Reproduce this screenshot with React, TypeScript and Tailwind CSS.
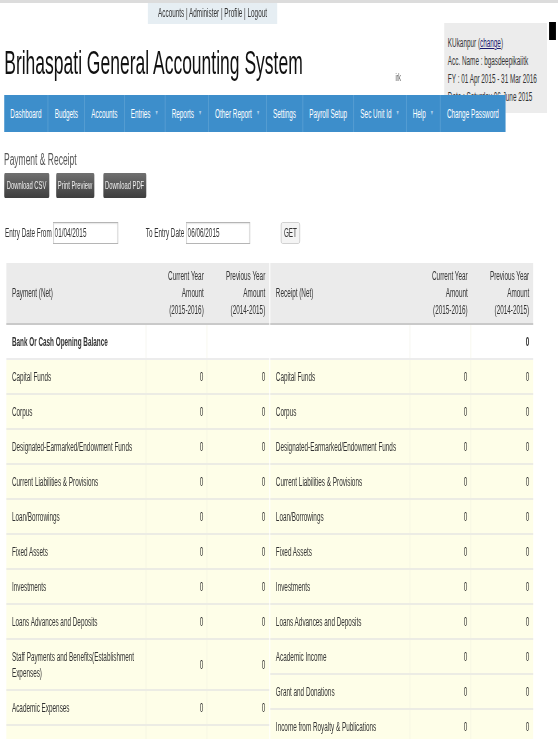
import React from 'react'

type Row = { label: string; cur?: string; prev?: string; bold?: boolean; plain?: boolean }

const NAV: { label: string; menu?: boolean }[] = [
  { label: 'Dashboard' },
  { label: 'Budgets' },
  { label: 'Accounts' },
  { label: 'Entries', menu: true },
  { label: 'Reports', menu: true },
  { label: 'Other Report', menu: true },
  { label: 'Settings' },
  { label: 'Payroll Setup' },
  { label: 'Sec Unit Id', menu: true },
  { label: 'Help', menu: true },
  { label: 'Change Password' },
]

const common = [
  'Capital Funds',
  'Corpus',
  'Designated-Earmarked/Endowment Funds',
  'Current Liabilities & Provisions',
  'Loan/Borrowings',
  'Fixed Assets',
  'Investments',
  'Loans Advances and Deposits',
]

const paymentRows: Row[] = [
  { label: 'Bank Or Cash Opening Balance', bold: true, plain: true },
  ...common.map((label) => ({ label, cur: '0', prev: '0' })),
  { label: 'Staff Payments and Benefits(Establishment Expenses)', cur: '0', prev: '0' },
  { label: 'Academic Expenses', cur: '0', prev: '0' },
  { label: '' },
]

const receiptRows: Row[] = [
  { label: '', prev: '0', bold: true, plain: true },
  ...common.map((label) => ({ label, cur: '0', prev: '0' })),
  { label: 'Academic Income', cur: '0', prev: '0' },
  { label: 'Grant and Donations', cur: '0', prev: '0' },
  { label: 'Income from Royalty & Publications', cur: '0', prev: '0' },
  { label: '' },
]

function ReportTable({ title, rows }: { title: string; rows: Row[] }) {
  return (
    <div className="w-[496px]">
      <div className="grid grid-cols-[264px_115px_117px] border-b-2 border-[#c9c9c9] bg-[#ebebeb] text-[12px] leading-[17px]">
        <div className="flex items-center py-[4.5px] pl-[11px]">{title}</div>
        <div className="py-[4.5px] pr-[6px] text-right">
          Current Year
          <br />
          Amount
          <br />
          (2015-2016)
        </div>
        <div className="py-[4.5px] pr-[7px] text-right">
          Previous Year
          <br />
          Amount
          <br />
          (2014-2015)
        </div>
      </div>
      {rows.map((r, i) => (
        <div
          key={i}
          className={
            r.plain
              ? 'grid grid-cols-[264px_115px_117px] border-b-2 border-[#ececec] bg-white text-[12px] leading-[16px]'
              : 'grid grid-cols-[264px_115px_117px] border-b-2 border-[#ececE4] bg-[#fefee8] text-[12px] leading-[16px]'
          }
        >
          <div
            className={
              r.bold
                ? 'flex min-h-[33px] items-center border-r border-[#eeeee4] py-[8.5px] pl-[11px] pr-[8px] font-bold'
                : 'flex min-h-[33px] items-center border-r border-[#f0f0e0] py-[8.5px] pl-[11px] pr-[8px]'
            }
          >
            {r.label}
          </div>
          <div className="flex items-center justify-end border-r border-[#f0f0e0] py-[8.5px] pr-[6px]">
            {r.cur}
          </div>
          <div
            className={
              r.bold
                ? 'flex items-center justify-end py-[8.5px] pr-[7px] font-bold'
                : 'flex items-center justify-end py-[8.5px] pr-[7px]'
            }
          >
            {r.prev}
          </div>
        </div>
      ))}
    </div>
  )
}

export default function App() {
  return (
    <div className="h-[739px] w-[558px] overflow-hidden bg-white">
      {/* the page is drawn at its own width and squeezed to the window */}
      <div className="w-[1053px] origin-top-left scale-x-[0.53] font-['Liberation_Sans',Arial,sans-serif] text-[#333]">
        <div className="h-[3px] bg-[#dcdcdc]" />

        <div className="relative">
          <div className="ml-[279px] h-[21px] w-[244px] bg-[#e6eef3] text-center text-[12px] leading-[21px] text-[#333]">
            Accounts | Administer | Profile | Logout
          </div>

          <div className="flex h-[71px] items-end pb-[12px] pl-[8px]">
            <h1 className="w-[738px] text-[33px] leading-[40px] text-[#111]">
              Brihaspati General Accounting System
            </h1>
            <span className="mb-[-1px] text-[10px] leading-[12px] text-[#555]">irk</span>
          </div>

          <div className="absolute left-[838px] top-[20px] z-0 h-[90px] w-[194px] bg-[#ececec] pl-[7px] pt-[11px] text-[12px] leading-[18px] text-[#333]">
            <div>
              KUkanpur (<span className="text-[#1a1a6e] underline">change</span>)
            </div>
            <div>Acc. Name : bgasdeepikaiitk</div>
            <div>FY : 01 Apr 2015 - 31 Mar 2016</div>
            <div>Date : Saturday 06 June 2015</div>
          </div>

          <div className="absolute left-[1036px] top-[19px] h-[18px] w-[13px] bg-black" />

          <nav className="relative z-10 ml-[7.5px] flex h-[37px] w-fit bg-[#3d8ecb] text-[12px] text-white">
            {NAV.map((n) => (
              <div
                key={n.label}
                className="flex items-center border-r border-[#6aa9d8] px-[12px]"
              >
                <span>{n.label}</span>
                {n.menu && <span className="ml-[8px] text-[7px] text-[#a9cdea]">▼</span>}
              </div>
            ))}
          </nav>
        </div>

        <div className="pl-[7.5px]">
          <div className="mt-[18px] text-[16px] leading-[20px] text-[#555]">Payment &amp; Receipt</div>

          <div className="mt-[3px] flex h-[25px] text-[11px] text-[#eee]">
            <button className="w-[85px] rounded-[2px] bg-gradient-to-b from-[#707070] to-[#3e3e3e]">
              Download CSV
            </button>
            <button className="ml-[13px] w-[72px] rounded-[2px] bg-gradient-to-b from-[#707070] to-[#3e3e3e]">
              Print Preview
            </button>
            <button className="ml-[17px] w-[81px] rounded-[2px] bg-gradient-to-b from-[#707070] to-[#3e3e3e]">
              Download PDF
            </button>
          </div>

          <div className="mt-[24px] flex h-[22px] items-center text-[12px]">
            <span className="w-[92.5px] pl-[2px]">Entry Date From</span>
            <input
              readOnly
              value="01/04/2015"
              className="h-[22px] w-[123px] border border-[#b5b5b5] px-[2px] text-[12px] text-[#333] shadow-[inset_0_1px_2px_rgba(0,0,0,0.1)]"
            />
            <span className="ml-[52px] w-[76px]">To Entry Date</span>
            <input
              readOnly
              value="06/06/2015"
              className="h-[22px] w-[121px] border border-[#b5b5b5] px-[2px] text-[12px] text-[#333] shadow-[inset_0_1px_2px_rgba(0,0,0,0.1)]"
            />
            <button className="ml-[58px] h-[22px] w-[36px] rounded-[3px] border border-[#c5c5c5] bg-[#f4f4f4] text-[12px]">
              GET
            </button>
          </div>

          <div className="ml-[4px] mt-[19px] flex gap-[2px]">
            <ReportTable title="Payment (Net)" rows={paymentRows} />
            <ReportTable title="Receipt (Net)" rows={receiptRows} />
          </div>
        </div>
      </div>
    </div>
  )
}
